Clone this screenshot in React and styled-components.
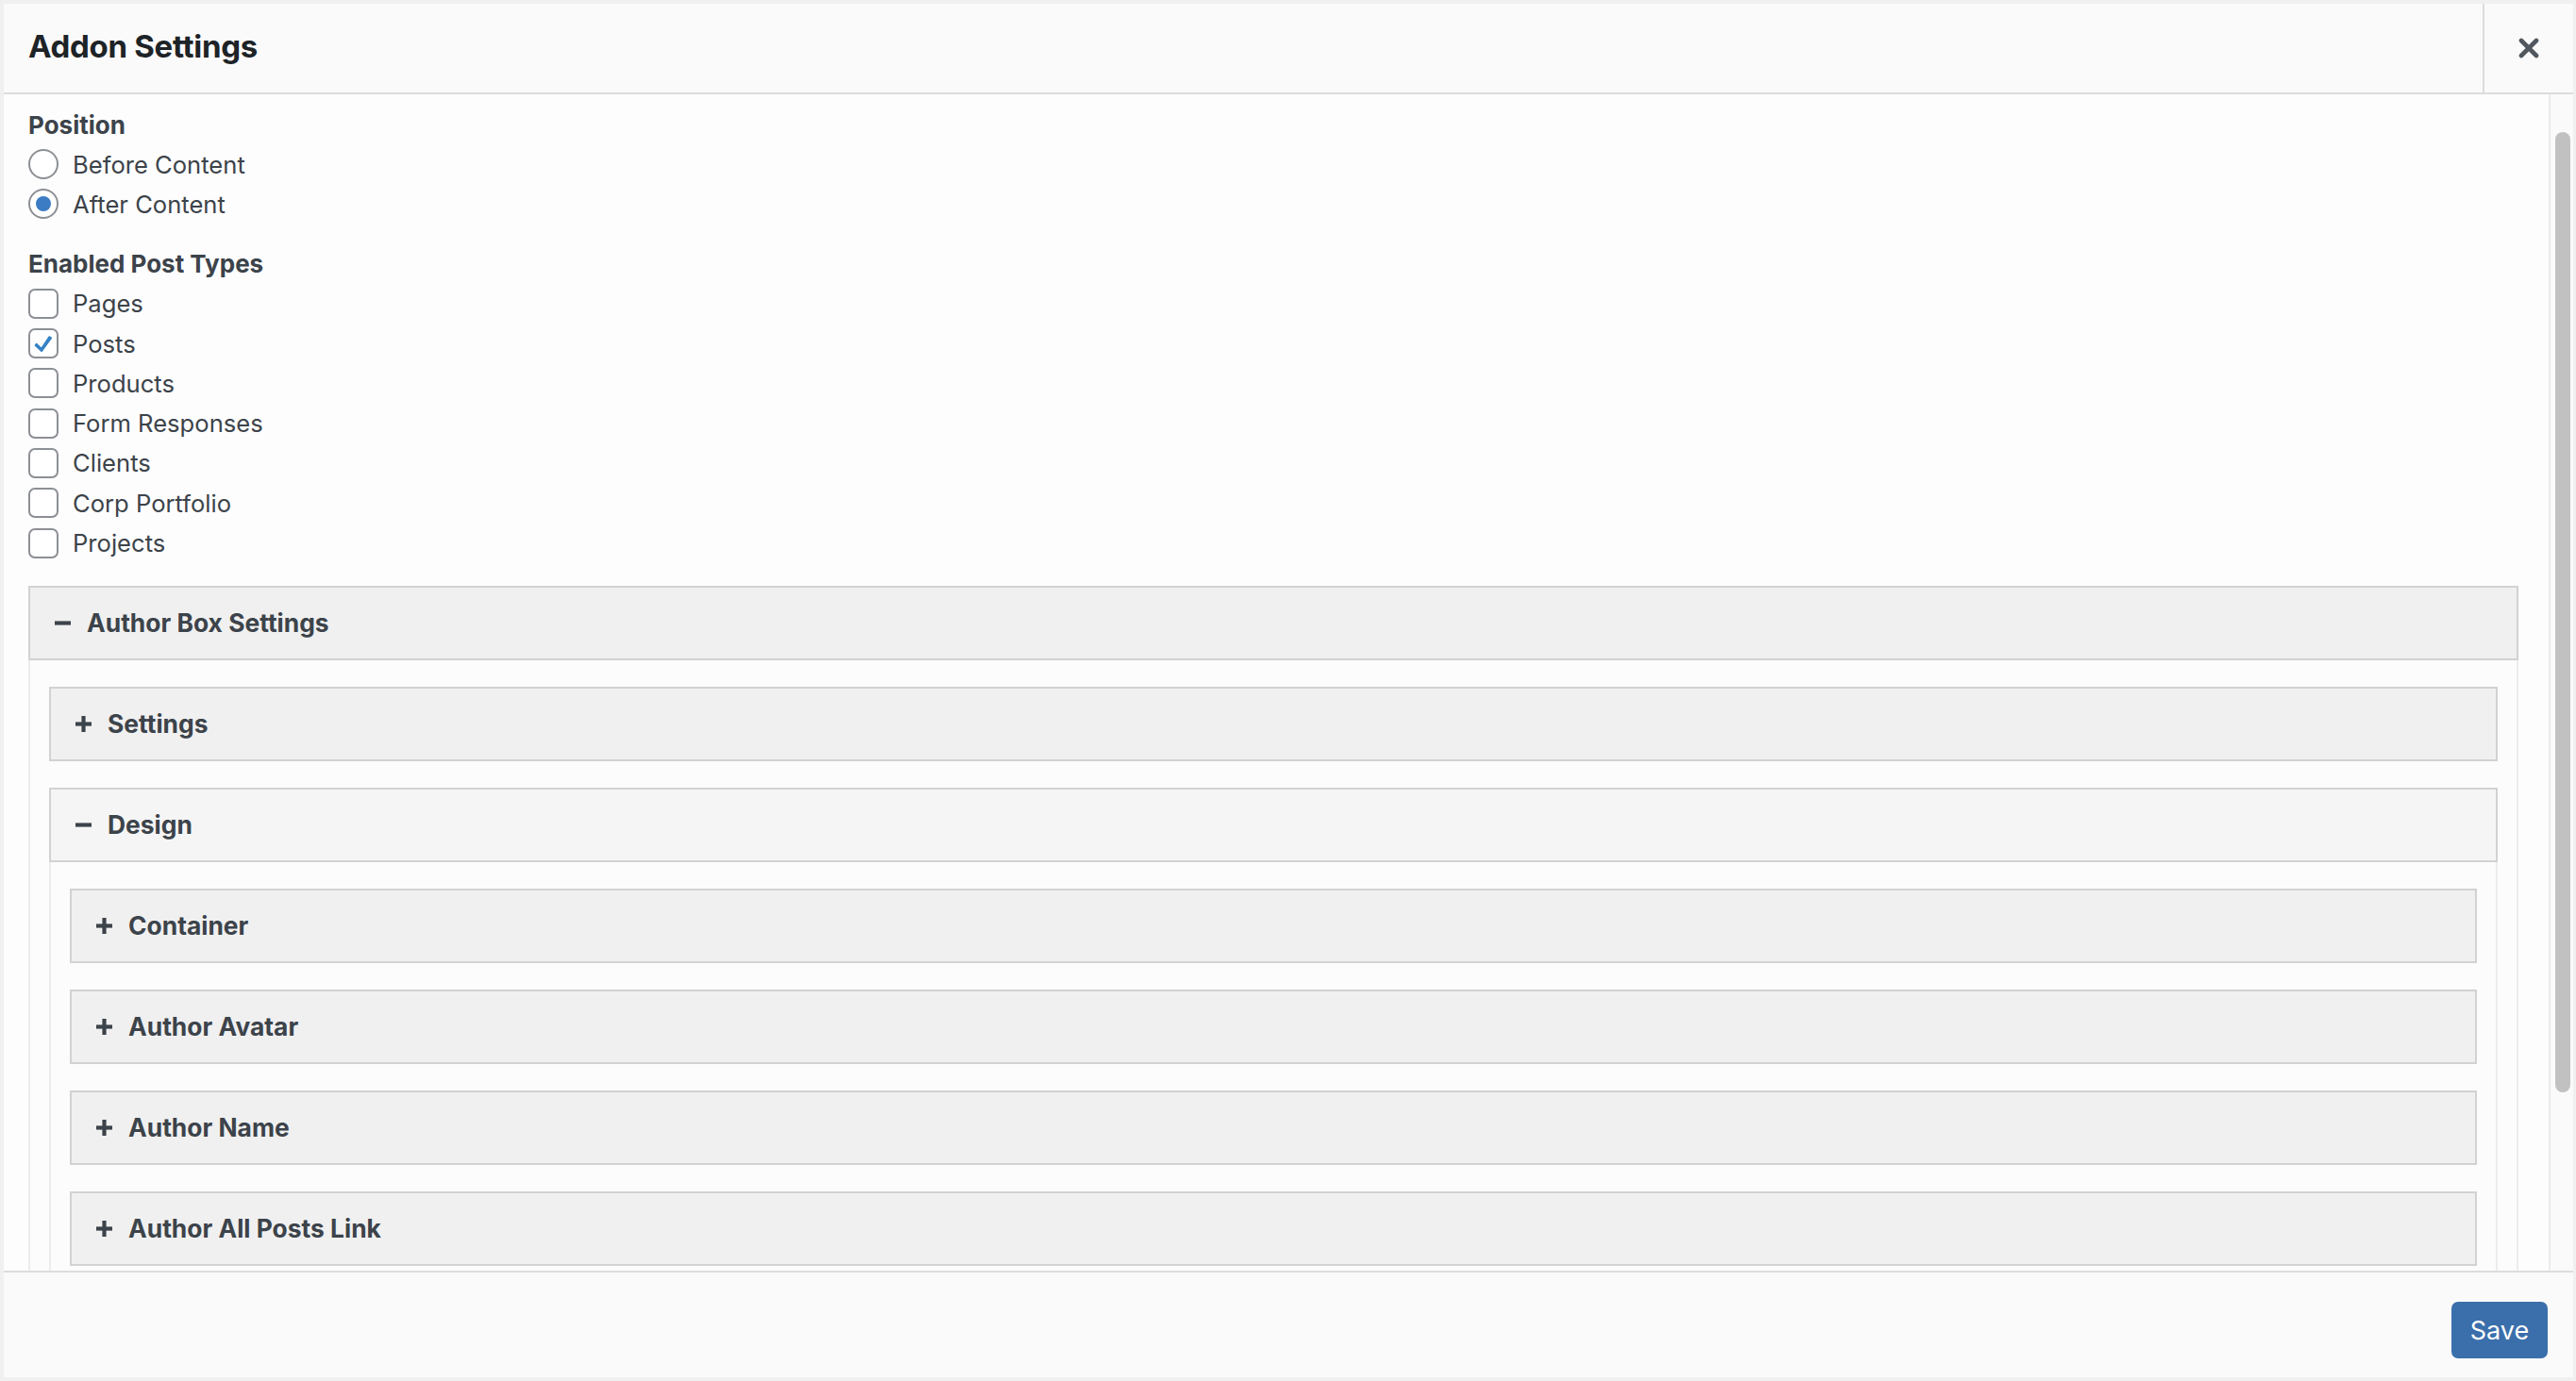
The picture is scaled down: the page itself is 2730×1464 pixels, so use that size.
import React from "react";
import styled, { createGlobalStyle } from "styled-components";

const GlobalStyle = createGlobalStyle`
  html, body {
    margin: 0;
    padding: 0;
    background: #f0f0f0;
  }
  body {
    font-family: Inter, "Noto Sans", sans-serif;
  }
`;

const postTypes = [
  { label: "Pages", checked: false },
  { label: "Posts", checked: true },
  { label: "Products", checked: false },
  { label: "Form Responses", checked: false },
  { label: "Clients", checked: false },
  { label: "Corp Portfolio", checked: false },
  { label: "Projects", checked: false },
];

const authorBox = {
  title: "Author Box Settings",
  open: true,
  children: [
    { title: "Settings" },
    {
      title: "Design",
      open: true,
      light: true,
      children: [
        { title: "Container" },
        { title: "Author Avatar" },
        { title: "Author Name" },
        { title: "Author All Posts Link" },
      ],
    },
  ],
};

function CloseIcon() {
  return (
    <svg width="22" height="22" viewBox="0 0 22 22">
      <path d="M3 3 L19 19 M19 3 L3 19" stroke="#50575e" strokeWidth="4.6" strokeLinecap="round" />
    </svg>
  );
}

function ToggleIcon({ open }) {
  return (
    <svg width="19" height="19" viewBox="0 0 19 19">
      <path d="M1 9.5 H18" stroke="#3c434a" strokeWidth="4.2" />
      {!open && <path d="M9.5 1 V18" stroke="#3c434a" strokeWidth="4.2" />}
    </svg>
  );
}

function Tick() {
  return (
    <svg width="26" height="26" viewBox="0 0 20 20">
      <path d="M14.8 4.6 L8.4 14.2 L4.4 10.4 L3.4 11.6 L8.6 16.4 L16.4 5.6 Z" fill="#3582c4" stroke="#3582c4" strokeWidth="1.2" strokeLinejoin="round" />
    </svg>
  );
}

function Accordion({ item }) {
  return (
    <Panel>
      <PanelHead $light={item.light}>
        <ToggleIcon open={item.open} />
        <span>{item.title}</span>
      </PanelHead>
      {item.open && item.children && (
        <PanelBody>
          {item.children.map((child) => (
            <Accordion key={child.title} item={child} />
          ))}
        </PanelBody>
      )}
    </Panel>
  );
}

export default function App() {
  return (
    <>
      <GlobalStyle />
      <Frame>
        <Dialog>
          <Header>
            <Title>Addon Settings</Title>
            <CloseButton aria-label="Close">
              <CloseIcon />
            </CloseButton>
          </Header>

          <Body>
            <Content>
              <Field>
                <Legend>Position</Legend>
                <Option>
                  <RadioMark />
                  Before Content
                </Option>
                <Option>
                  <RadioMark $checked />
                  After Content
                </Option>
              </Field>

              <Field>
                <Legend>Enabled Post Types</Legend>
                {postTypes.map((type) => (
                  <Option key={type.label}>
                    <CheckMark>{type.checked && <Tick />}</CheckMark>
                    {type.label}
                  </Option>
                ))}
              </Field>

              <Accordion item={authorBox} />
            </Content>
            <Track>
              <Thumb />
            </Track>
          </Body>

          <Footer>
            <SaveButton>Save</SaveButton>
          </Footer>
        </Dialog>
      </Frame>
    </>
  );
}

const Frame = styled.div`
  width: 2730px;
  height: 1464px;
  box-sizing: border-box;
  padding: 4px 3px 4px 4px;
  display: flex;
`;

const Dialog = styled.div`
  flex: 1;
  display: flex;
  flex-direction: column;
  background: #fdfdfd;
  overflow: hidden;
`;

const Header = styled.header`
  height: 96px;
  flex-shrink: 0;
  box-sizing: border-box;
  border-bottom: 2px solid #dcdcdc;
  background: #fafafa;
  display: flex;
`;

const Title = styled.h1`
  flex: 1;
  margin: 0;
  padding: 0 0 4px 26px;
  display: flex;
  align-items: center;
  font-size: 33px;
  font-weight: 700;
  color: #1d2327;
  letter-spacing: -0.3px;
`;

const CloseButton = styled.button`
  width: 96px;
  padding: 0;
  border: 0;
  border-left: 2px solid #dcdcdc;
  background: transparent;
  display: flex;
  align-items: center;
  justify-content: center;
`;

const Body = styled.div`
  flex: 1;
  min-height: 0;
  display: flex;
`;

const Content = styled.div`
  flex: 1;
  overflow: hidden;
  padding: 11px 32px 0 26px;
`;

const Track = styled.div`
  width: 26px;
  flex-shrink: 0;
  box-sizing: border-box;
  border-left: 2px solid #ebebeb;
  background: #fafafa;
  padding: 40px 0 0 5px;
`;

const Thumb = styled.div`
  width: 16px;
  height: 1018px;
  border-radius: 8px;
  background: #c1c1c1;
`;

const Field = styled.div`
  & + & {
    margin-top: 21px;
  }
  & + section {
    margin-top: 24px;
  }
`;

const Legend = styled.div`
  height: 42px;
  display: flex;
  align-items: center;
  font-size: 26px;
  font-weight: 700;
  color: #3c434a;
`;

const Option = styled.label`
  height: 42.3px;
  display: flex;
  align-items: center;
  gap: 15px;
  font-size: 25.6px;
  color: #3c434a;
`;

const RadioMark = styled.span`
  width: 32px;
  height: 32px;
  box-sizing: border-box;
  border: 2px solid #8c8f94;
  border-radius: 50%;
  background: #fff;
  display: flex;
  align-items: center;
  justify-content: center;

  &::after {
    content: "";
    width: 16px;
    height: 16px;
    border-radius: 50%;
    background: ${(p) => (p.$checked ? "#3b7cc4" : "transparent")};
  }
`;

const CheckMark = styled.span`
  width: 32px;
  height: 32px;
  box-sizing: border-box;
  border: 2px solid #8c8f94;
  border-radius: 7px;
  background: #fff;
  display: flex;
  align-items: center;
  justify-content: center;
`;

const Panel = styled.section``;

const PanelHead = styled.div`
  height: 79px;
  box-sizing: border-box;
  border: 2px solid #d2d2d2;
  background: ${(p) => (p.$light ? "#f5f5f5" : "#f0f0f0")};
  display: flex;
  align-items: center;
  gap: 16px;
  padding-left: 25px;
  font-size: 26.4px;
  font-weight: 700;
  color: #3c434a;
`;

const PanelBody = styled.div`
  border: 2px solid #ececec;
  border-top: 0;
  background: #fcfcfc;
  padding: 28px 20px;
  display: flex;
  flex-direction: column;
  gap: 28px;
`;

const Footer = styled.footer`
  height: 113px;
  flex-shrink: 0;
  box-sizing: border-box;
  border-top: 2px solid #dcdcdc;
  background: #fafafa;
  display: flex;
  justify-content: flex-end;
  align-items: flex-start;
  padding: 31px 27px 0 0;
`;

const SaveButton = styled.button`
  width: 102px;
  height: 60px;
  border: 0;
  border-radius: 7px;
  background: #3a6fab;
  color: #fff;
  font-family: Inter, "Noto Sans", sans-serif;
  font-size: 27px;
  font-weight: 400;
`;
